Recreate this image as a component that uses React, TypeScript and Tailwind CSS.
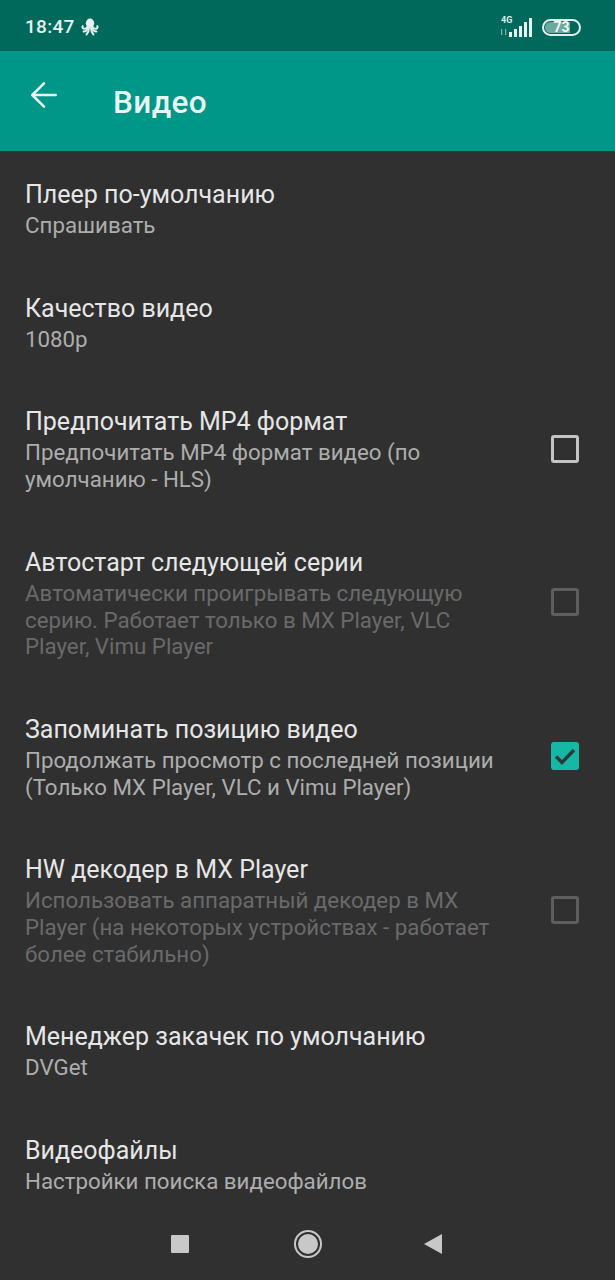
import { ArrowLeft } from "lucide-react";

type Row = {
  title: string;
  lines: string[];
  dim?: boolean;
  check?: "off" | "disabled" | "on";
};

const ROWS: Row[] = [
  { title: "Плеер по-умолчанию", lines: ["Спрашивать"] },
  { title: "Качество видео", lines: ["1080p"] },
  {
    title: "Предпочитать MP4 формат",
    lines: ["Предпочитать MP4 формат видео (по", "умолчанию - HLS)"],
    check: "off",
  },
  {
    title: "Автостарт следующей серии",
    lines: ["Автоматически проигрывать следующую", "серию. Работает только в MX Player, VLC", "Player, Vimu Player"],
    dim: true,
    check: "disabled",
  },
  {
    title: "Запоминать позицию видео",
    lines: ["Продолжать просмотр с последней позиции", "(Только MX Player, VLC и Vimu Player)"],
    check: "on",
  },
  {
    title: "HW декодер в MX Player",
    lines: ["Использовать аппаратный декодер в MX", "Player (на некоторых устройствах - работает", "более стабильно)"],
    dim: true,
    check: "disabled",
  },
  { title: "Менеджер закачек по умолчанию", lines: ["DVGet"] },
  { title: "Видеофайлы", lines: ["Настройки поиска видеофайлов"] },
];

function Check({ state }: { state: NonNullable<Row["check"]> }) {
  if (state === "on") {
    return (
      <div className="flex h-[28px] w-[28px] items-center justify-center rounded-[3px] bg-[#15b8a4]">
        <svg viewBox="0 0 28 28" className="h-[28px] w-[28px]" fill="none">
          <path d="M5 14.500l6 6L23 8" stroke="#2a3a3c" strokeWidth="3.400" />
        </svg>
      </div>
    );
  }
  return (
    <div
      className={`h-[28px] w-[28px] rounded-[3px] border-[3px] ${
        state === "off" ? "border-[#c4c4c4]" : "border-[#5e5e5e]"
      }`}
    />
  );
}

function Octopus() {
  return (
    <svg viewBox="0 0 18 18" className="h-[18px] w-[18px]" fill="none" stroke="#e6f2ef" strokeWidth="1.900" strokeLinecap="round">
      <ellipse cx="9" cy="5.200" rx="4.200" ry="4.700" fill="#e6f2ef" stroke="none" />
      <path d="M6.500 8.500C6 10.500 4 11 2.500 10.500 1.300 10 1 8.500 1.800 8" />
      <path d="M11.500 8.500c.5 2 2.500 2.500 4 2 1.200-.5 1.500-2 .7-2.500" />
      <path d="M7 9.500c-.5 2.500-2.500 4-4.500 4" />
      <path d="M11 9.500c.5 2.500 2.500 4 4.500 4" />
      <path d="M8 10c0 3-1 5-2.500 6.500" />
      <path d="M10 10c0 3 1 5 2.500 6.500" />
    </svg>
  );
}

function Signal() {
  return (
    <div className="relative h-[22px] w-[34px]">
      <span className="absolute top-[-1px] left-[1px] text-[9px] leading-[10px] font-bold text-[#dff0ec]">4G</span>
      <svg viewBox="0 0 34 22" className="absolute inset-0 h-[22px] w-[34px]" fill="#e6f4f0">
        <path d="M1 13h1.200v6H1zM5 13h1.200v6H5z" fill="#7fb3a8" />
        <rect x="9" y="16" width="3" height="5" />
        <rect x="14" y="13" width="3" height="8" />
        <rect x="19" y="10" width="3" height="11" />
        <rect x="24" y="6" width="3" height="15" />
        <rect x="29" y="2" width="3" height="19" />
      </svg>
    </div>
  );
}

function Battery() {
  return (
    <div className="relative flex h-[17px] w-[39px] items-center justify-center rounded-full border-2 border-[#dff0ec] p-[1px]">
      <div className="absolute inset-y-[1px] left-[1px] w-[25px] rounded-l-full bg-[#6fa99d]" />
      <span className="relative text-[14px] leading-none font-bold text-[#eef8f5]">73</span>
    </div>
  );
}

export default function App() {
  return (
    <div className="flex h-[1280px] w-[615px] flex-col overflow-hidden bg-[#303030] font-['Roboto',sans-serif]">
      <div className="flex h-[51px] shrink-0 items-center justify-between bg-[#00695c] pt-[3px] pr-[34px] pl-[25px]">
        <div className="flex items-center gap-[6px]">
          <span className="text-[19px] font-medium tracking-[0.3px] text-[#e6f2ef]">18:47</span>
          <Octopus />
        </div>
        <div className="flex items-center gap-[8px]">
          <Signal />
          <Battery />
        </div>
      </div>

      <div className="flex h-[100px] shrink-0 bg-[#009688] text-[#e8f5f2]">
        <ArrowLeft className="mt-[24px] ml-[24px] h-[40px] w-[40px]" strokeWidth={1.5} />
        <h1 className="mt-[33px] ml-[49px] text-[31.500px] leading-[38px] font-medium tracking-[0.4px]">Видео</h1>
      </div>

      <div className="min-h-0 flex-1 overflow-hidden">
        {ROWS.map((row) => (
          <div key={row.title} className="flex items-center pr-[36px] pl-[25px]">
            <div className="min-w-0 flex-1 pt-[26px] pb-[26px]">
              <div className="text-[25px] leading-[35px] text-[#e6e6e6]">{row.title}</div>
              <div className={`text-[22.300px] leading-[26.700px] ${row.dim ? "text-[#6a6a6a]" : "text-[#adadad]"}`}>
                {row.lines.map((line) => (
                  <div key={line} className="whitespace-nowrap">
                    {line}
                  </div>
                ))}
              </div>
            </div>
            {row.check && <Check state={row.check} />}
          </div>
        ))}
      </div>

      <div className="flex h-[70px] shrink-0 items-center bg-[#303030] pb-[2px]">
        <div className="ml-[171px] h-[18px] w-[18px] rounded-[1px] bg-[#c8c8c8]" />
        <div className="ml-[105px] flex h-[28px] w-[28px] items-center justify-center rounded-full border-2 border-[#c8c8c8]">
          <div className="h-[20px] w-[20px] rounded-full bg-[#c8c8c8]" />
        </div>
        <svg viewBox="0 0 20 22" className="ml-[101px] h-[22px] w-[20px]" fill="#c8c8c8">
          <path d="M1 11L19 1v20z" />
        </svg>
      </div>
    </div>
  );
}
